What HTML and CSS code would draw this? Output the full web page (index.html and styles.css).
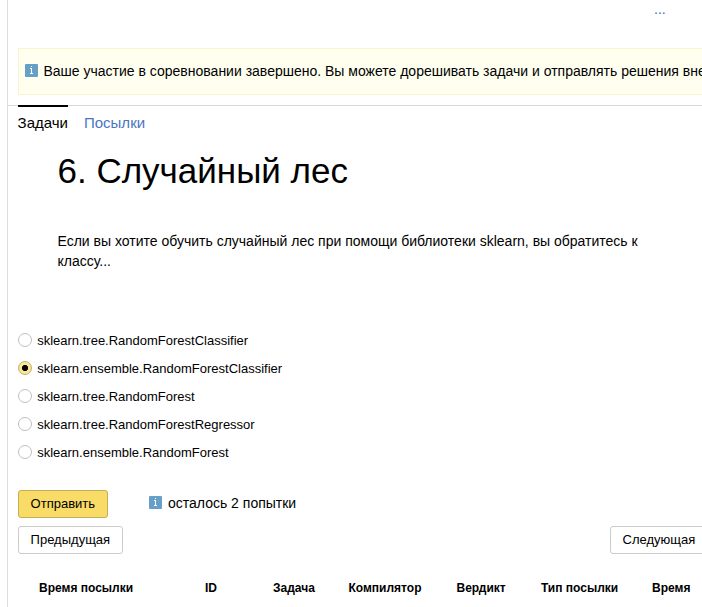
FILE: index.html
```html
<!DOCTYPE html>
<html lang="ru">
<head>
<meta charset="utf-8">
<title>Случайный лес</title>
<link rel="stylesheet" href="styles.css">
</head>
<body>
<div class="page">
  <div class="top"><a class="more">...</a></div>
  <div class="notice"><svg class="info" viewBox="0 0 13 13"><rect width="13" height="13" rx="1" fill="#669fc7"/><path d="M6 2h1v1H6zM5 4h2v5H6V5H5zM5 9h3v1H5z" fill="#fff"/></svg><span>Ваше участие в соревновании завершено. Вы можете дорешивать задачи и отправлять решения вне</span></div>
  <nav class="tabs"><a class="tab active">Задачи</a><a class="tab">Посылки</a></nav>
  <main class="problem">
    <h1>6. Случайный лес</h1>
    <p>Если вы хотите обучить случайный лес при помощи библиотеки sklearn, вы обратитесь к классу...</p>
  </main>
  <div class="options">
    <label class="option"><i class="radio"></i><span>sklearn.tree.RandomForestClassifier</span></label>
    <label class="option"><i class="radio checked"></i><span>sklearn.ensemble.RandomForestClassifier</span></label>
    <label class="option"><i class="radio"></i><span>sklearn.tree.RandomForest</span></label>
    <label class="option"><i class="radio"></i><span>sklearn.tree.RandomForestRegressor</span></label>
    <label class="option"><i class="radio"></i><span>sklearn.ensemble.RandomForest</span></label>
  </div>
  <div class="submit"><button class="button primary">Отправить</button><svg class="info" viewBox="0 0 13 13"><rect width="13" height="13" rx="1" fill="#669fc7"/><path d="M6 2h1v1H6zM5 4h2v5H6V5H5zM5 9h3v1H5z" fill="#fff"/></svg><span>осталось 2 попытки</span></div>
  <div class="pager"><button class="button">Предыдущая</button><button class="button next">Следующая</button></div>
  <div class="head"><b>Время посылки</b><b>ID</b><b>Задача</b><b>Компилятор</b><b>Вердикт</b><b>Тип посылки</b><b>Время</b></div>
</div>
</body>
</html>
```
FILE: styles.css
```css
* { box-sizing: border-box; }
body { margin: 0; background: #fff; color: #000; font: 14px/20px "Liberation Sans", Arial, sans-serif; overflow: hidden; }
.page { width: 695px; height: 607px; margin-left: 7px; border-left: 1px solid #ddd; overflow: hidden; }
.top { height: 48px; padding-right: 36.3px; text-align: right; line-height: 18px; color: #3a68c2; }
.notice { display: flex; align-items: center; width: 720px; height: 47px; margin-left: 10px; padding: 0 0 2px 6px; background: #fffff0; border: 1px solid #f8f4cc; white-space: nowrap; }
.info { width: 13px; height: 13px; margin-right: 5.5px; flex: none; }
.notice .info { margin-top: -1px; }
.tabs { display: flex; gap: 16px; height: 36px; margin-top: 10px; padding-left: 9.6px; border-top: 1px solid #d9d9d9; font-size: 15px; }
.tab { margin-top: -1px; padding-top: 6px; border-top: 2px solid transparent; color: #4a76c2; }
.active { color: #000; border-color: #000; }
.problem { height: 185px; padding: 10px 40px 0 49.5px; }
h1 { margin: 0 0 40px; font-size: 35px; line-height: 40px; font-weight: 400; }
p { margin: 0; width: 600px; }
.options { height: 164px; padding-left: 10px; font-size: 13px; }
.option { display: flex; align-items: center; height: 28px; }
.option span { padding-top: 2px; }
.radio { width: 14px; height: 14px; margin-right: 5.2px; border: 1px solid #c0c0c0; border-radius: 50%; }
.checked { background: radial-gradient(circle, #000 0 2.7px, #fbe59b 3.5px); border-color: #c4ae68; }
.submit { display: flex; align-items: center; height: 28px; padding-left: 10px; }
.submit .info { margin: -3px 6px 0 41px; }
.submit span { padding-bottom: 2px; }
.button { height: 28px; padding: 0 12px 2px 11.6px; border: 1px solid #ccc; border-radius: 3px; background: #fff; color: #000; font: 13px "Liberation Sans", Arial, sans-serif; }
.primary { width: 90px; background: #f9db67; border-color: #c6af53; }
.pager { display: flex; justify-content: space-between; margin-top: 8px; padding-left: 10px; width: 700.3px; }
.head { display: grid; grid-template-columns: 166px 68px 75.5px 108px 84.5px 111px 60px; margin: 24px 0 0 31px; font-size: 12px; white-space: nowrap; }
```
